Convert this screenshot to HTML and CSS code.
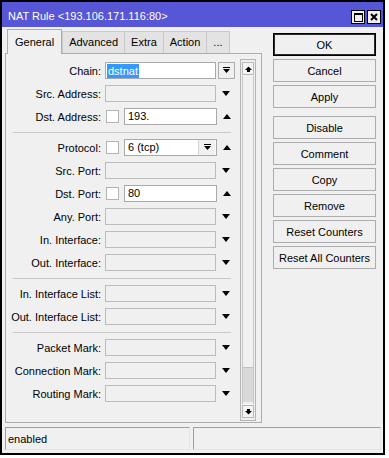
FILE: index.html
```html
<!DOCTYPE html>
<html lang="en">
<head>
    <meta charset="UTF-8">
    <meta name="viewport" content="width=device-width, initial-scale=1.0">
    <title>NAT Rule</title>
    <link rel="stylesheet" href="styles.css">
</head>
<body>
    <div class="window">
        <div class="titlebar">
            <span class="title">NAT Rule &lt;193.106.171.116:80&gt;</span>
            <div class="win-btns">
                <span class="wbtn">
                    <svg width="9" height="9" viewBox="0 0 9 9"><rect x="0.5" y="0.5" width="8" height="8" fill="none" stroke="#000"/><rect x="0" y="0" width="9" height="2" fill="#000"/></svg>
                </span>
                <span class="wbtn">
                    <svg width="8" height="8" viewBox="0 0 8 8"><path d="M1 1 L7 7 M7 1 L1 7" stroke="#000" stroke-width="2"/></svg>
                </span>
            </div>
        </div>

        <div class="client">
            <div class="main">
                <div class="left">
                    <div class="tabs">
                        <span class="tab active">General</span>
                        <span class="tab">Advanced</span>
                        <span class="tab">Extra</span>
                        <span class="tab">Action</span>
                        <span class="tab">...</span>
                    </div>
                    <div class="panel">
                        <div class="form">
                            <div class="row">
                                <span class="label">Chain:</span>
                                <span class="field active"><span class="selected">dstnat</span></span>
                                <span class="dd-btn">
                                    <svg width="7" height="7" viewBox="0 0 7 7"><rect x="0" y="0" width="7" height="1"/><polygon points="0,2 7,2 3.5,6"/></svg>
                                </span>
                            </div>
                            <div class="row">
                                <span class="label">Src. Address:</span>
                                <span class="field"></span>
                                <span class="slot"><i class="down"></i></span>
                            </div>
                            <div class="row">
                                <span class="label">Dst. Address:</span>
                                <span class="check"></span>
                                <span class="field active short">193.</span>
                                <span class="slot"><i class="up"></i></span>
                            </div>
                            <div class="sep"></div>
                            <div class="row">
                                <span class="label">Protocol:</span>
                                <span class="check"></span>
                                <span class="field active short combo">
                                    <span class="combo-text">6 (tcp)</span>
                                    <span class="dd-btn inner">
                                        <svg width="7" height="7" viewBox="0 0 7 7"><rect x="0" y="0" width="7" height="1"/><polygon points="0,2 7,2 3.5,6"/></svg>
                                    </span>
                                </span>
                                <span class="slot"><i class="up"></i></span>
                            </div>
                            <div class="row">
                                <span class="label">Src. Port:</span>
                                <span class="field"></span>
                                <span class="slot"><i class="down"></i></span>
                            </div>
                            <div class="row">
                                <span class="label">Dst. Port:</span>
                                <span class="check"></span>
                                <span class="field active short">80</span>
                                <span class="slot"><i class="up"></i></span>
                            </div>
                            <div class="row">
                                <span class="label">Any. Port:</span>
                                <span class="field"></span>
                                <span class="slot"><i class="down"></i></span>
                            </div>
                            <div class="row">
                                <span class="label">In. Interface:</span>
                                <span class="field"></span>
                                <span class="slot"><i class="down"></i></span>
                            </div>
                            <div class="row">
                                <span class="label">Out. Interface:</span>
                                <span class="field"></span>
                                <span class="slot"><i class="down"></i></span>
                            </div>
                            <div class="sep"></div>
                            <div class="row">
                                <span class="label">In. Interface List:</span>
                                <span class="field"></span>
                                <span class="slot"><i class="down"></i></span>
                            </div>
                            <div class="row">
                                <span class="label">Out. Interface List:</span>
                                <span class="field"></span>
                                <span class="slot"><i class="down"></i></span>
                            </div>
                            <div class="sep"></div>
                            <div class="row">
                                <span class="label">Packet Mark:</span>
                                <span class="field"></span>
                                <span class="slot"><i class="down"></i></span>
                            </div>
                            <div class="row">
                                <span class="label">Connection Mark:</span>
                                <span class="field"></span>
                                <span class="slot"><i class="down"></i></span>
                            </div>
                            <div class="row">
                                <span class="label">Routing Mark:</span>
                                <span class="field"></span>
                                <span class="slot"><i class="down"></i></span>
                            </div>
                        </div>

                        <div class="scrollbar">
                            <span class="sb-btn">
                                <svg width="7" height="6" viewBox="0 0 7 6"><polygon points="0,4 3.5,0.5 7,4"/><rect x="2" y="4" width="3" height="2"/></svg>
                            </span>
                            <span class="sb-track"><span class="sb-thumb"></span></span>
                            <span class="sb-btn">
                                <svg width="7" height="6" viewBox="0 0 7 6"><rect x="2" y="0" width="3" height="2"/><polygon points="0,2 7,2 3.5,5.5"/></svg>
                            </span>
                        </div>
                    </div>
                </div>

                <div class="buttons">
                    <button class="btn default">OK</button>
                    <button class="btn">Cancel</button>
                    <button class="btn">Apply</button>
                    <button class="btn group">Disable</button>
                    <button class="btn">Comment</button>
                    <button class="btn">Copy</button>
                    <button class="btn">Remove</button>
                    <button class="btn">Reset Counters</button>
                    <button class="btn">Reset All Counters</button>
                </div>
            </div>

            <div class="statusbar">
                <div class="status first">enabled</div>
                <div class="status"></div>
            </div>
        </div>
    </div>
</body>
</html>
```

FILE: styles.css
```css
body {
    margin: 0;
    background: #fff;
    font-family: "Liberation Sans", Arial, sans-serif;
    font-size: 11px;
    color: #000;
}

.window {
    width: 385px;
    height: 455px;
    border: 2px solid #000;
    box-sizing: border-box;
    background: #f0f0f0;
    display: flex;
    flex-direction: column;
}

/* title bar */
.titlebar {
    height: 25px;
    background: #5656d6;
    color: #fff;
    display: flex;
    align-items: center;
    padding: 0 2px 0 6px;
    font-size: 11px;
}

.title {
    flex: 1;
    padding-top: 3px;
}

.win-btns {
    display: flex;
    gap: 2px;
    padding-top: 5px;
}

.wbtn {
    width: 14px;
    height: 14px;
    box-sizing: border-box;
    background: #f0f0f0;
    border: 1px solid #000;
    display: flex;
    align-items: center;
    justify-content: center;
}

/* client area */
.client {
    flex: 1;
    display: flex;
    flex-direction: column;
    padding: 2px 2px 3px 3px;
}

.main {
    flex: 1;
    display: flex;
}

.left {
    width: 257px;
    display: flex;
    flex-direction: column;
}

.tabs {
    height: 24px;
    display: flex;
    align-items: flex-end;
    padding-left: 2px;
}

.tab {
    height: 22px;
    box-sizing: border-box;
    padding: 0 6px;
    line-height: 21px;
    background: #e3e3e3;
    border: 1px solid #c9c9c9;
    border-bottom: none;
    margin-right: -1px;
}

.tab.active {
    height: 25px;
    line-height: 24px;
    padding: 0 7px;
    background: #f0f0f0;
    border-color: #adadad;
    position: relative;
    z-index: 1;
    margin-bottom: -1px;
    margin-right: 0;
}

.panel {
    flex: 1;
    display: flex;
    border: 1px solid #adadad;
    padding: 5px 5px 1px 0;
}

.form {
    flex: 1;
}

.row {
    height: 23px;
    display: flex;
    align-items: center;
}

.label {
    width: 95px;
    padding-right: 4px;
    text-align: right;
    white-space: nowrap;
}

.field {
    width: 111px;
    height: 17px;
    box-sizing: border-box;
    border: 1px solid #bcbcbc;
    background: #f0f0f0;
    padding-left: 3px;
    line-height: 15px;
    display: flex;
    align-items: center;
}

.field.active {
    background: #fff;
    border-color: #a9a9a9;
}

.field.short {
    width: 93px;
}

.selected {
    background: #3399ff;
    color: #fff;
    padding: 0 1px;
    margin-left: -2px;
    line-height: 14px;
}

.check {
    width: 13px;
    height: 13px;
    box-sizing: border-box;
    border: 1px solid #b3b3b3;
    background: #fff;
    margin: 0 5px 0 1px;
}

.combo {
    padding-right: 1px;
}

.combo-text {
    flex: 1;
}

.dd-btn {
    width: 17px;
    height: 17px;
    box-sizing: border-box;
    border: 1px solid #adadad;
    background: #f0f0f0;
    margin-left: 2px;
    display: flex;
    align-items: center;
    justify-content: center;
}

.dd-btn.inner {
    height: 15px;
    border-width: 0 0 0 1px;
    border-color: #d4d4d4;
}

.slot {
    width: 19px;
    display: flex;
    justify-content: center;
}

.down {
    border-left: 4px solid transparent;
    border-right: 4px solid transparent;
    border-top: 5px solid #000;
}

.up {
    border-left: 4px solid transparent;
    border-right: 4px solid transparent;
    border-bottom: 5px solid #000;
}

.sep {
    height: 8px;
    margin: 0 5px 0 7px;
    display: flex;
    align-items: center;
}

.sep::after {
    content: "";
    flex: 1;
    border-top: 1px solid #c8c8c8;
}

/* scrollbar */
.scrollbar {
    width: 17px;
    box-sizing: border-box;
    border: 1px solid #b4b4b4;
    margin-left: 4px;
    display: flex;
    flex-direction: column;
    padding: 2px 1px;
    gap: 1px;
}

.sb-btn {
    height: 13px;
    box-sizing: border-box;
    border: 1px solid #b9b9b9;
    background: #f4f4f4;
    display: flex;
    align-items: center;
    justify-content: center;
}

.sb-track {
    flex: 1;
    border-left: 1px solid #c8c8c8;
    border-right: 1px solid #c8c8c8;
    display: flex;
    flex-direction: column;
    justify-content: flex-end;
}

.sb-thumb {
    height: 34px;
    margin-bottom: 2px;
    background: #d9d9d9;
    border-top: 1px solid #c2c2c2;
}

/* buttons */
.buttons {
    width: 103px;
    margin-left: 11px;
    padding-top: 4px;
    display: flex;
    flex-direction: column;
    gap: 3px;
}

.btn {
    height: 23px;
    padding: 0;
    font-family: inherit;
    font-size: 11px;
    color: #000;
    background: #f0f0f0;
    border: 1px solid #adadad;
}

.btn.default {
    border-color: #000;
    box-shadow: inset 0 0 0 1px #2b2b2b;
}

.btn.group {
    margin-top: 5px;
}

/* status bar */
.statusbar {
    height: 23px;
    margin-top: 4px;
    display: flex;
    gap: 3px;
}

.status {
    flex: 1;
    border-top: 1px solid #a0a0a0;
    border-left: 1px solid #a0a0a0;
    border-right: 1px solid #e4e4e4;
    border-bottom: 1px solid #e4e4e4;
    padding-left: 2px;
    line-height: 22px;
}

.status.first {
    flex: none;
    width: 181px;
}
```
